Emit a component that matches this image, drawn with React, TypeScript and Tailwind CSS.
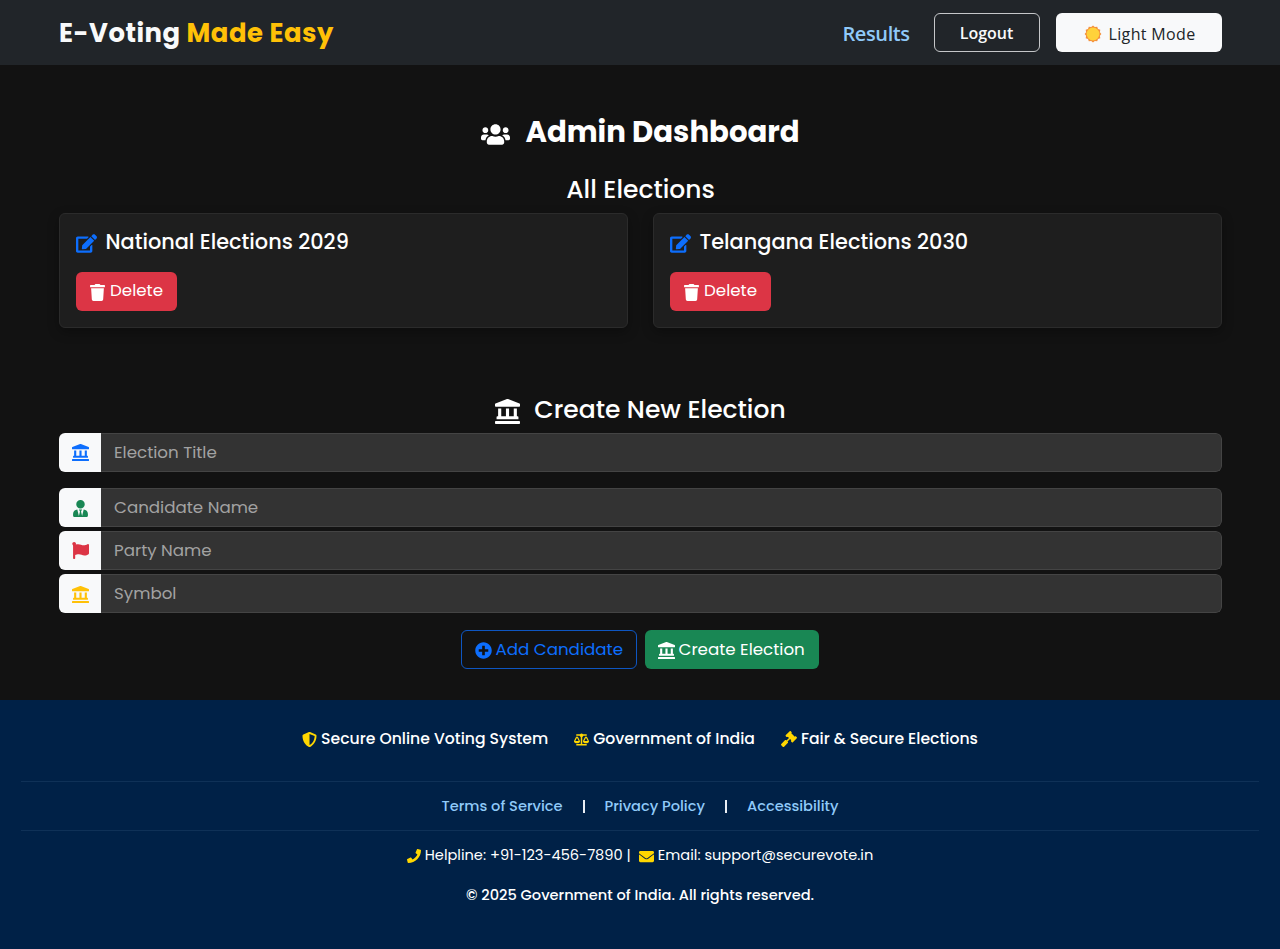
import type { ReactNode } from "react";
import {
  FaBalanceScale,
  FaEdit,
  FaEnvelope,
  FaFlag,
  FaGavel,
  FaLandmark,
  FaPhone,
  FaPlusCircle,
  FaShieldAlt,
  FaTrash,
  FaUserTie,
  FaUsers,
} from "react-icons/fa";

function SunIcon() {
  return (
    <svg viewBox="0 0 18 18" className="h-[18px] w-[18px] shrink-0">
      <polygon
        fill="#f4903c"
        points="9,0.6 10.8,2.1 13.2,1.7 14,3.9 16.3,4.8 15.9,7.2 17.4,9 15.9,10.8 16.3,13.2 14,14.1 13.2,16.3 10.8,15.9 9,17.4 7.2,15.9 4.8,16.3 4,14.1 1.7,13.2 2.1,10.8 0.6,9 2.1,7.2 1.7,4.8 4,3.9 4.8,1.7 7.2,2.1"
      />
      <circle cx="9" cy="9" r="6.4" fill="#ffd23b" />
    </svg>
  );
}

function ElectionCard({ title }: { title: string }) {
  return (
    <article className="h-[115px] rounded-md border border-[#2b2b2b] bg-[#1e1e1e] px-4 pt-4 shadow-[0_4px_12px_rgba(0,0,0,0.3)]">
      <div className="flex h-[25px] items-center">
        <FaEdit className="relative top-px mr-[8.5px] h-[21px] w-[21px] shrink-0 text-[#0d6efd]" />
        <span className="pb-px text-[20.85px] font-medium">{title}</span>
      </div>
      <button className="mt-[17px] flex h-[39px] w-[101px] items-center rounded-md bg-[#dc3545] pl-[13px] text-[16.7px]">
        <FaTrash className="relative top-px mr-1 h-[17px] w-[17px] shrink-0" />
        <span className="pb-px">Delete</span>
      </button>
    </article>
  );
}

function Field({ icon, label }: { icon: ReactNode; label: string }) {
  return (
    <label className="flex h-[39px] w-full overflow-hidden rounded-md">
      <span className="flex w-[42px] shrink-0 items-center justify-center bg-[#f8f9fa] pl-px">{icon}</span>
      <span className="flex flex-1 items-center rounded-r-md border border-l-0 border-[#444] bg-[#333] pl-[13px] text-[16.7px] text-[#a2a2a2]">
        {label}
      </span>
    </label>
  );
}

export default function App() {
  return (
    <div className="min-h-[949px] w-full bg-[#121212] font-['Poppins','Inter',sans-serif] whitespace-nowrap text-white">
      <header className="flex h-[65px] items-center bg-[#212529] pr-[58.5px] pl-[59px] font-['Segoe_UI','Open_Sans',sans-serif]">
        <div className="flex-1 pt-px font-['Poppins','Inter',sans-serif] text-[25.9px] leading-[39px] font-bold tracking-[0.5px] text-[#f8f9fa]">
          E-Voting <span className="text-[#ffc107]">Made Easy</span>
        </div>
        <a className="mr-6 w-[67px] pt-0.5 text-xl leading-7 font-semibold tracking-[-0.4px] text-[#90caf9]">Results</a>
        <button className="mr-4 h-[39px] w-[106px] rounded-md border border-[#c5c7c9] pt-px text-base font-semibold text-[#f8f9fa]">
          Logout
        </button>
        <button className="flex h-[39px] w-[166px] items-center rounded-md bg-[#f8f9fa] pt-0.5 pl-7 text-base font-medium text-[#212529]">
          <SunIcon />
          <span className="ml-[7px] tracking-[0.35px]">Light Mode</span>
        </button>
      </header>

      <main className="h-[635px] pr-[58px] pl-[59px] pt-12">
        <h1 className="flex h-10 items-center justify-center text-[29.2px] font-bold">
          <FaUsers className="relative top-px mr-[15px] h-[29px] w-[29px] shrink-0" />
          <span className="pb-[2px]">Admin Dashboard</span>
        </h1>
        <h2 className="mt-[17px] h-10 text-center text-[25px] leading-10 font-medium">All Elections</h2>
        <section className="mt-[3px] grid grid-cols-2 gap-[25px]">
          <ElectionCard title="National Elections 2029" />
          <ElectionCard title="Telangana Elections 2030" />
        </section>

        <h2 className="mt-[62px] flex h-10 items-center justify-center text-[25px] font-medium">
          <FaLandmark className="relative top-[1.5px] mr-[14px] h-[25px] w-[25px] shrink-0" />
          <span>Create New Election</span>
        </h2>
        <form>
          <div className="mt-[3px]">
            <Field icon={<FaLandmark className="h-[17px] w-[17px] text-[#0d6efd]" />} label="Election Title" />
          </div>
          <div className="mt-4 grid gap-1">
            <Field icon={<FaUserTie className="relative top-px h-[17px] w-[17px] text-[#198754]" />} label="Candidate Name" />
            <Field icon={<FaFlag className="h-[17px] w-[17px] text-[#dc3545]" />} label="Party Name" />
            <Field icon={<FaLandmark className="relative top-px h-[17px] w-[17px] text-[#ffc107]" />} label="Symbol" />
          </div>
          <div className="mt-[17px] flex justify-center gap-2 pr-0.5 text-[16.7px]">
            <button type="button" className="flex h-[39px] w-[176px] items-center rounded-md border border-[#0d6efd]/75 pl-[13px] text-[#0d6efd]">
              <FaPlusCircle className="relative top-px mr-1 h-[17px] w-[17px] shrink-0" />
              <span>Add Candidate</span>
            </button>
            <button type="button" className="flex h-[39px] w-[174px] items-center rounded-md bg-[#198754] pl-[13px]">
              <FaLandmark className="relative top-px mr-1 h-[17px] w-[17px] shrink-0" />
              <span>Create Election</span>
            </button>
          </div>
        </form>
      </main>

      <footer className="h-[249px] bg-[#002147] px-[21px]">
        <div className="flex h-[81px] items-center justify-center gap-[26px] pb-1 text-[15.65px] font-medium">
          <span className="flex items-center">
            <FaShieldAlt className="relative top-px mr-1 h-[15px] w-[15px] shrink-0 text-[#ffd700]" />
            Secure Online Voting System
          </span>
          <span className="flex items-center">
            <FaBalanceScale className="relative top-px mr-1 h-[15px] w-[15px] shrink-0 text-[#ffd700]" />
            Government of India
          </span>
          <span className="flex items-center">
            <FaGavel className="relative top-px mr-1 h-[16px] w-[16px] shrink-0 text-[#ffd700]" />
            Fair &amp; Secure Elections
          </span>
        </div>
        <nav className="flex h-[50px] items-center justify-center border-y border-[#0f3157] pt-px text-[14.6px] font-medium text-[#90caf9]">
          <a>Terms of Service</a>
          <span className="ml-[20px] h-[13px] w-0.5 bg-[#e8edf3]" />
          <a className="ml-[20px]">Privacy Policy</a>
          <span className="ml-[20px] h-[13px] w-0.5 bg-[#e8edf3]" />
          <a className="ml-[20px]">Accessibility</a>
        </nav>
        <div className="flex h-[50px] items-center justify-center text-[14.6px]">
          <FaPhone className="mr-1 h-[14px] w-[14px] shrink-0 text-[#ffd700]" />
          <span className="mr-2">Helpline: +91-123-456-7890 |</span>
          <FaEnvelope className="mr-1 h-[15px] w-[15px] shrink-0 text-[#ffd700]" />
          <span>Email: support@securevote.in</span>
        </div>
        <p className="mt-[3px] text-center text-[14.6px] leading-[22px] font-medium">
          © 2025 Government of India. All rights reserved.
        </p>
      </footer>
    </div>
  );
}
